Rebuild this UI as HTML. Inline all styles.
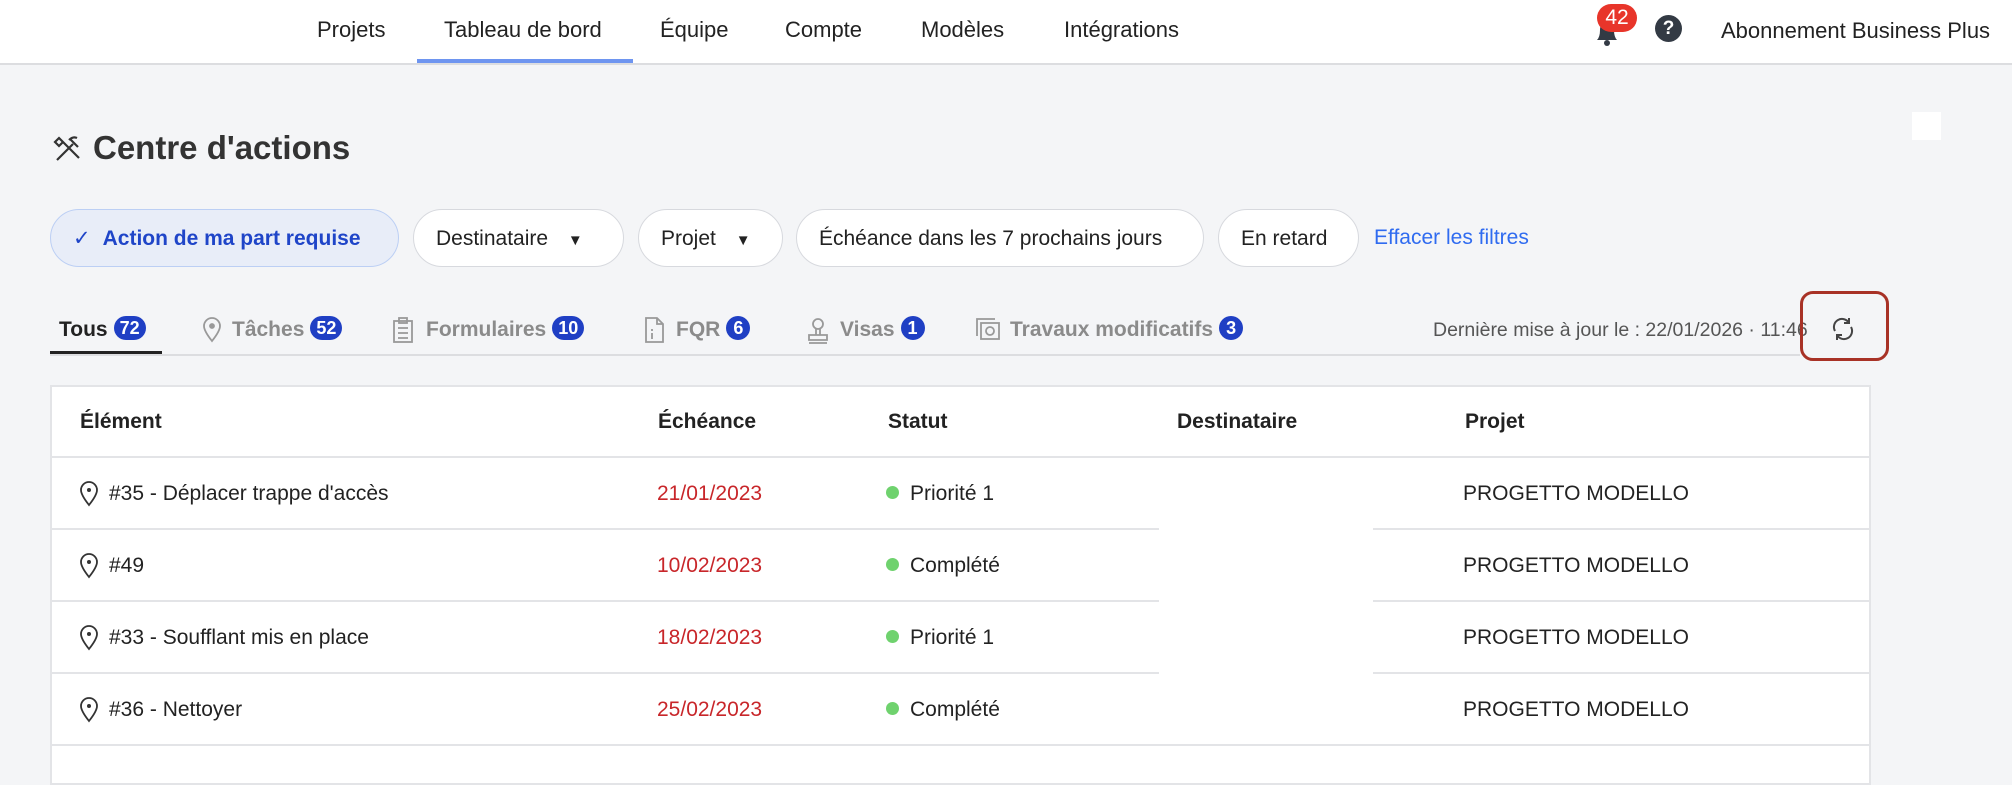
<!DOCTYPE html>
<html><head><meta charset="utf-8"><style>
*{margin:0;padding:0;box-sizing:border-box}
body{width:2012px;height:764px;overflow:hidden;background:#f4f5f7;font-family:"Liberation Sans",sans-serif;color:#2b2b2b;position:relative}
.a{position:absolute;white-space:nowrap}
.nav{position:absolute;left:0;top:0;width:2012px;height:65px;background:#fff;border-bottom:2px solid #dcdde0}
.nv{position:absolute;top:17px;font-size:22px;color:#222}
.pill{position:absolute;top:209px;height:58px;border:1.5px solid #d7d9de;background:#fff;border-radius:29px;font-size:21px;line-height:57px;padding-left:22px;color:#222}
.tab{position:absolute;top:316px;font-size:21px;font-weight:bold;color:#8b8b8b}
.bd{display:inline-block;background:#1f3fc4;color:#fff;border-radius:12px;font-size:18px;line-height:24px;height:24px;padding:0 6px;margin-left:6px;vertical-align:2px;font-weight:bold;min-width:24px;text-align:center}
.th{position:absolute;top:410px;font-size:21px;font-weight:bold;color:#222}
.td{position:absolute;font-size:21px;color:#222}
.red{color:#c8262a}
.dot{display:inline-block;width:13px;height:13px;border-radius:50%;background:#6fd26e;margin-right:11px;vertical-align:1px}
.hl{position:absolute;height:2px;background:#e3e4e7}
</style></head><body>
<div class="nav">
<div class="nv" style="left:317px">Projets</div>
<div class="nv" style="left:444px">Tableau de bord</div>
<div style="position:absolute;left:417px;top:59px;width:216px;height:4px;background:#6e95f0"></div>
<div class="nv" style="left:660px">Équipe</div>
<div class="nv" style="left:785px">Compte</div>
<div class="nv" style="left:921px">Modèles</div>
<div class="nv" style="left:1064px">Intégrations</div>
<svg class="a" style="left:1592px;top:18px" width="30" height="28" viewBox="0 0 30 28"><path d="M5 22 Q8 19 8 12 Q8 4 15 4 Q22 4 22 12 Q22 19 25 22 Z" fill="#333a44"/><circle cx="15" cy="25" r="3" fill="#333a44"/></svg>
<div class="a" style="left:1597px;top:4px;width:40px;height:28px;border-radius:14px;background:#e8352a;color:#fff;font-size:21px;line-height:28px;text-align:center">42</div>
<div class="a" style="left:1655px;top:15px;width:27px;height:27px;border-radius:50%;background:#333a44;color:#fff;font-size:19px;font-weight:bold;line-height:27px;text-align:center">?</div>
<div class="nv" style="left:1721px;top:18px">Abonnement Business Plus</div>
</div>
<div class="a" style="left:1912px;top:112px;width:29px;height:28px;background:#fff"></div>
<svg class="a" style="left:53px;top:134px" width="30" height="30" viewBox="0 0 30 30" fill="none" stroke="#333" stroke-width="2.2"><path d="M4 26 L20 10 M17 5 L25 13 M16 6 Q20 2 24 4 M8 6 L26 24 M6 4 L10 8 L6 12 L2 8 Z"/></svg>
<div class="a" style="left:93px;top:129px;font-size:33px;font-weight:bold;color:#333">Centre d'actions</div>
<div class="pill" style="left:50px;width:349px;background:#e8edf8;border-color:#bccff4;color:#1f45c8;font-weight:bold;padding-left:22px"><span style="font-weight:normal;margin-right:12px">✓</span>Action de ma part requise</div>
<div class="pill" style="left:413px;width:211px">Destinataire <span style="font-size:15px;margin-left:14px">▼</span></div>
<div class="pill" style="left:638px;width:145px">Projet <span style="font-size:15px;margin-left:14px">▼</span></div>
<div class="pill" style="left:796px;width:408px">Échéance dans les 7 prochains jours</div>
<div class="pill" style="left:1218px;width:141px">En retard</div>
<div class="a" style="left:1374px;top:226px;font-size:21px;color:#2f6bf0">Effacer les filtres</div>
<div class="a" style="left:50px;top:354px;width:1750px;height:2px;background:#dcdde0"></div>
<div class="a" style="left:50px;top:351px;width:112px;height:3px;background:#222"></div>
<div class="tab" style="left:59px;color:#222">Tous<span class="bd">72</span></div>
<svg class="a" style="left:202px;top:317px" width="20" height="26" viewBox="0 0 20 26" fill="none" stroke="#999" stroke-width="1.8"><path d="M10 24 Q2 14 2 9 A8 8 0 0 1 18 9 Q18 14 10 24Z"/><circle cx="10" cy="9" r="2" fill="#999"/></svg>
<div class="tab" style="left:232px">Tâches<span class="bd">52</span></div>
<svg class="a" style="left:392px;top:317px" width="22" height="26" viewBox="0 0 22 26" fill="none" stroke="#999" stroke-width="1.8"><rect x="2" y="4" width="18" height="21"/><rect x="7" y="1" width="8" height="5"/><path d="M6 11h10M6 16h10M6 21h10"/></svg>
<div class="tab" style="left:426px">Formulaires<span class="bd">10</span></div>
<svg class="a" style="left:644px;top:317px" width="20" height="26" viewBox="0 0 20 26" fill="none" stroke="#999" stroke-width="1.8"><path d="M2 1h11l6 6v18H2z M13 1v6h6"/><path d="M8 12v2M8 16v6"/></svg>
<div class="tab" style="left:676px">FQR<span class="bd">6</span></div>
<svg class="a" style="left:806px;top:317px" width="24" height="28" viewBox="0 0 24 28" fill="none" stroke="#999" stroke-width="1.8"><circle cx="12" cy="7" r="5"/><path d="M10 12v6M14 12v6M3 18h18v5H3zM3 26h18"/></svg>
<div class="tab" style="left:840px">Visas<span class="bd">1</span></div>
<svg class="a" style="left:975px;top:317px" width="26" height="24" viewBox="0 0 26 24" fill="none" stroke="#999" stroke-width="1.8"><path d="M2 19V2h18"/><rect x="6" y="6" width="18" height="16"/><circle cx="15" cy="14" r="4"/></svg>
<div class="tab" style="left:1010px">Travaux modificatifs<span class="bd">3</span></div>
<div class="a" style="left:1433px;top:319px;font-size:19.5px;color:#555">Dernière mise à jour le : 22/01/2026 · 11:46</div>
<svg class="a" style="left:1828px;top:314px" width="30" height="30" viewBox="0 0 30 30" fill="none" stroke="#444" stroke-width="2"><path d="M7 17 A8 8 0 0 1 21 9 M23 13 A8 8 0 0 1 9 21"/><path d="M21 4v5h-5M9 26v-5h5"/></svg>
<div class="a" style="left:1800px;top:291px;width:89px;height:70px;border:3.5px solid #a83226;border-radius:13px"></div>
<div class="a" style="left:50px;top:385px;width:1821px;height:400px;background:#fff;border:2px solid #e3e4e7"></div>
<div class="th" style="left:80px">Élément</div>
<div class="th" style="left:658px">Échéance</div>
<div class="th" style="left:888px">Statut</div>
<div class="th" style="left:1177px">Destinataire</div>
<div class="th" style="left:1465px">Projet</div>
<div class="hl" style="left:50px;top:456px;width:1821px"></div>
<div class="hl" style="left:50px;top:528px;width:1109px"></div><div class="hl" style="left:1373px;top:528px;width:498px"></div>
<div class="hl" style="left:50px;top:600px;width:1109px"></div><div class="hl" style="left:1373px;top:600px;width:498px"></div>
<div class="hl" style="left:50px;top:672px;width:1109px"></div><div class="hl" style="left:1373px;top:672px;width:498px"></div>
<div class="hl" style="left:50px;top:744px;width:1821px"></div>
<svg width="0" height="0" style="position:absolute"><symbol id="pin" viewBox="0 0 20 26"><path d="M10 24 Q2 14 2 9 A8 8 0 0 1 18 9 Q18 14 10 24Z" fill="none" stroke="#333" stroke-width="1.8"/><circle cx="10" cy="9" r="2" fill="#333"/></symbol></svg>
<svg class="a" style="left:79px;top:481px" width="20" height="26"><use href="#pin"/></svg>
<div class="td" style="left:109px;top:482px">#35 - Déplacer trappe d'accès</div>
<div class="td red" style="left:657px;top:482px">21/01/2023</div>
<div class="td" style="left:886px;top:482px"><span class="dot"></span>Priorité 1</div>
<div class="td" style="left:1463px;top:482px">PROGETTO MODELLO</div>
<svg class="a" style="left:79px;top:553px" width="20" height="26"><use href="#pin"/></svg>
<div class="td" style="left:109px;top:554px">#49</div>
<div class="td red" style="left:657px;top:554px">10/02/2023</div>
<div class="td" style="left:886px;top:554px"><span class="dot"></span>Complété</div>
<div class="td" style="left:1463px;top:554px">PROGETTO MODELLO</div>
<svg class="a" style="left:79px;top:625px" width="20" height="26"><use href="#pin"/></svg>
<div class="td" style="left:109px;top:626px">#33 - Soufflant mis en place</div>
<div class="td red" style="left:657px;top:626px">18/02/2023</div>
<div class="td" style="left:886px;top:626px"><span class="dot"></span>Priorité 1</div>
<div class="td" style="left:1463px;top:626px">PROGETTO MODELLO</div>
<svg class="a" style="left:79px;top:697px" width="20" height="26"><use href="#pin"/></svg>
<div class="td" style="left:109px;top:698px">#36 - Nettoyer</div>
<div class="td red" style="left:657px;top:698px">25/02/2023</div>
<div class="td" style="left:886px;top:698px"><span class="dot"></span>Complété</div>
<div class="td" style="left:1463px;top:698px">PROGETTO MODELLO</div>
</body></html>
